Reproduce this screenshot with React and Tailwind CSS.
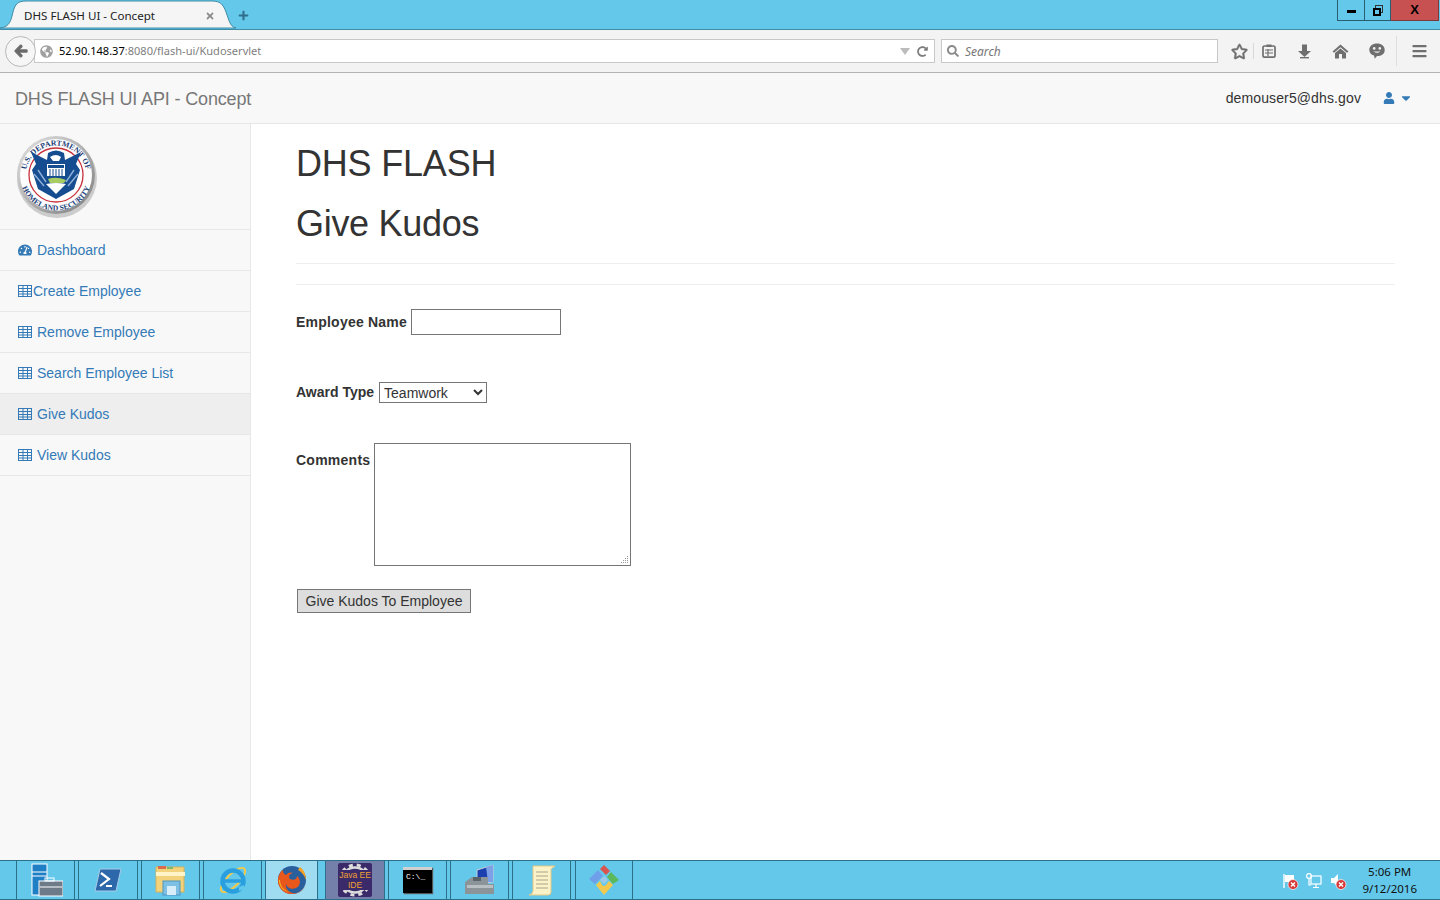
import React from "react";
import { FaTachometerAlt, FaUser, FaCaretDown, FaArrowLeft, FaRegStar, FaSearch, FaRedoAlt, FaGlobeAmericas, FaBars, FaPlus, FaTimes } from "react-icons/fa";

const sans = "font-['Liberation_Sans',Arial,sans-serif]";

function Seal() {
  return (
    <svg width="84" height="84" viewBox="0 0 84 84" className="block">
      <defs>
        <path id="sealTop" d="M 10.5 42 A 30.5 30.5 0 0 1 71.5 42" />
        <path id="sealBot" d="M 4.5 40 A 36.5 36.5 0 0 0 77.5 40" />
        <linearGradient id="sealRim" x1="0" y1="0" x2="1" y2="1">
          <stop offset="0" stopColor="#e4e4e4" />
          <stop offset="1" stopColor="#7d7d7d" />
        </linearGradient>
      </defs>
      <circle cx="42" cy="44" r="40" fill="#a8a8a8" opacity="0.55" />
      <circle cx="41" cy="41" r="39" fill="url(#sealRim)" />
      <circle cx="41" cy="41" r="36" fill="#fdfdfd" />
      <text fontSize="7.8" fontWeight="700" fill="#1a3d78" fontFamily="Liberation Serif, serif">
        <textPath href="#sealTop" startOffset="50%" textAnchor="middle">U.S. DEPARTMENT OF</textPath>
      </text>
      <text fontSize="7.6" fontWeight="700" fill="#1a3d78" fontFamily="Liberation Serif, serif">
        <textPath href="#sealBot" startOffset="50%" textAnchor="middle">HOMELAND SECURITY</textPath>
      </text>
      <circle cx="41" cy="41" r="27" fill="#fff" stroke="#c8323c" strokeWidth="1.3" />
      <path d="M16 18 L32 26 L33 19 Q41 14 49 19 L50 26 L66 18 L61 30 L65 36 L59 55 L41 65 L23 55 L17 36 L21 30 Z" fill="#164c90" />
      <path d="M35 23 Q41 19 46 23 L44 27 L38 27 Z" fill="#fff" />
      <path d="M32 30 H50 V42 H32 Z" fill="#fff" />
      <path d="M33 31 H49 V34 H33 Z" fill="#164c90" />
      <path d="M35 35 V42 M38 35 V42 M41 35 V42 M44 35 V42 M47 35 V42" stroke="#164c90" strokeWidth="1" />
      <path d="M19 40 L29 52 M23 36 L31 48 M63 40 L53 52 M59 36 L51 48" stroke="#8fb0d8" strokeWidth="1.4" />
      <path d="M33 45 Q41 42 51 46 L49 49 L35 49 Z" fill="#a8cc62" />
      <path d="M31 50 Q41 48 51 50 L41 60 Z" fill="#fff" />
    </svg>
  );
}

const TableIcon = () => (
  <svg width="14" height="12" viewBox="0 0 14 12" className="block">
    <rect x="0.5" y="0.5" width="13" height="11" fill="none" stroke="#337ab7" />
    <path d="M0.5 3.5 H13.5 M0.5 6.5 H13.5 M0.5 9 H13.5 M5 0.5 V11.5 M9.5 0.5 V11.5" stroke="#337ab7" strokeWidth="1" />
  </svg>
);

function NavItem({ icon, label, active, tight }) {
  return (
    <div className={`flex items-center h-[41px] border-b border-[#e7e7e7] pl-[17px] text-[14px] text-[#337ab7] ${active ? "bg-[#eeeeee]" : ""}`}>
      <span className="w-[16px] flex justify-center text-[14px]">{icon}</span>
      <span className={tight ? "ml-0" : "ml-[4px]"}>{label}</span>
    </div>
  );
}

function TaskBtn({ children, w, active, ml, bg }) {
  return (
    <div className={`h-[38px] flex items-center justify-center border-l border-r border-[#2b6f88] ${w} ${ml} ${active ? "bg-[#9fdcf2]" : ""} ${bg || ""}`}>
      {children}
    </div>
  );
}

const ServerIcon = () => (
  <svg width="34" height="34" viewBox="0 0 34 34">
    <rect x="3" y="1" width="15" height="31" fill="#1f7fc4" stroke="#fff" strokeWidth="1" />
    <path d="M3 9 H18 M3 13 H18" stroke="#fff" strokeWidth="1" />
    <rect x="10" y="18" width="24" height="15" fill="#6d7b88" stroke="#fff" strokeWidth="1" />
    <rect x="16" y="15" width="9" height="3" fill="none" stroke="#fff" strokeWidth="1" />
    <path d="M11 24 H33" stroke="#fff" strokeWidth="1" />
  </svg>
);
const PsIcon = () => (
  <svg width="28" height="26" viewBox="0 0 28 26">
    <path d="M6 2 H27 L22 24 H1 Z" fill="#2d68ab" stroke="#a9cbe8" />
    <path d="M7 6 L15 12 L6 19 M12 19 H18" stroke="#fff" strokeWidth="2.2" fill="none" />
  </svg>
);
const FolderIcon = () => (
  <svg width="32" height="32" viewBox="0 0 32 32">
    <path d="M1 3 H29 V28 H1 Z" fill="#f2d27a" stroke="#d7b25c" />
    <rect x="3" y="2" width="8" height="3" fill="#d96b4d" />
    <rect x="12" y="3" width="6" height="2" fill="#7fb76a" />
    <path d="M1 8 H30 V12 H1 Z" fill="#fff3c8" />
    <rect x="8" y="17" width="17" height="14" fill="#7ec0e4" stroke="#4e94bf" />
    <rect x="12" y="22" width="9" height="9" fill="#d7eefa" />
  </svg>
);
const IeIcon = () => (
  <svg width="32" height="32" viewBox="0 0 32 32">
    <ellipse cx="16" cy="16" rx="16" ry="6" transform="rotate(-45 16 16)" fill="none" stroke="#f2c94c" strokeWidth="2" />
    <circle cx="16" cy="17" r="10.5" fill="none" stroke="#2a9fe0" strokeWidth="4.5" />
    <path d="M7 17 H26" stroke="#2a9fe0" strokeWidth="3.5" />
    <path d="M22 23 L27 21 L27 25 L22 27 Z" fill="#62c8ea" />
  </svg>
);
const FirefoxIcon = () => (
  <svg width="32" height="32" viewBox="0 0 32 32">
    <circle cx="16" cy="16" r="14" fill="#2a5f9e" />
    <path d="M16 30 C6 30 1 22 2 14 C3 10 5 7 7 6 C7 9 8 10 10 11 C12 8 15 8 17 9 C13 10 12 13 14 15 C18 17 21 15 21 12 C25 15 25 22 20 24 C16 26 11 24 10 20 C9 25 14 30 20 29 C26 28 30 23 30 17 C30 25 24 30 16 30 Z" fill="#e8581c" />
    <path d="M24 3 C28 6 30 11 30 16 C28 11 26 8 22 6 Z" fill="#f6a11f" />
    <path d="M4 16 C4 22 8 27 14 28 C8 28 3 23 3 16 Z" fill="#f6c11f" />
  </svg>
);
const JavaIcon = () => (
  <div className="relative w-[34px] h-[34px] bg-[#3a2a6a] rounded-[2px] flex items-center justify-center">
    <svg width="34" height="34" viewBox="0 0 34 34" className="absolute inset-0">
      <circle cx="17" cy="17" r="15" fill="none" stroke="#dcdcdc" strokeWidth="3" strokeDasharray="4 4" />
      <circle cx="17" cy="17" r="12.5" fill="none" stroke="#dcdcdc" strokeWidth="2.5" />
    </svg>
    <div className="relative whitespace-nowrap text-[8.5px] leading-[10px] text-center text-[#f0a030] bg-[#3a2a6a] px-[1px] font-['Liberation_Sans',sans-serif]">Java EE<br />IDE</div>
  </div>
);
const CmdIcon = () => (
  <div className="w-[29px] h-[26px] bg-black border-t-[3px] border-[#d0d0d0] shadow-[1px_1px_1px_#555] text-white text-[8px] leading-[14px] pl-[3px] font-['Liberation_Mono',monospace]">C:\_</div>
);
const PcIcon = () => (
  <svg width="32" height="32" viewBox="0 0 32 32">
    <path d="M13 6 L29 1 V18 L13 20 Z" fill="#1b3fae" stroke="#c8d0d8" />
    <path d="M22 3 L29 1 V18 L24 18 Z" fill="#7ea0e6" />
    <path d="M1 18 L8 13 H24 V20 L30 20 V30 H1 Z" fill="#8b9499" />
    <rect x="3" y="21" width="26" height="3" fill="#b8c0c4" />
    <rect x="9" y="13" width="8" height="4" fill="#5b6468" />
  </svg>
);
const ScrollIcon = () => (
  <svg width="28" height="32" viewBox="0 0 28 32">
    <path d="M5 2 H27 L23 5 V28 Q23 31 20 31 H1 Q5 30 5 27 Z" fill="#fcf2c8" stroke="#e2c987" />
    <path d="M8 8 H20 M8 12 H20 M8 16 H20 M8 20 H20 M8 24 H20" stroke="#a8a48c" strokeWidth="1" />
  </svg>
);
const GitIcon = () => (
  <svg width="32" height="32" viewBox="0 0 32 32">
    <path d="M16 1 L22 7 L18 11 L12 5 Z" fill="#d9534f" />
    <path d="M23 8 L31 16 L25 20 L19 13 Z" fill="#5cb85c" />
    <path d="M10 6 L15 12 L7 20 L1 15 Z" fill="#6f9fe8" />
    <path d="M8 21 L12 17 L14 21 Q16 23 18 21 L21 17 L25 21 L16 31 Z" fill="#f2c94c" />
    <path d="M16 12 L20 16 L16 20 L12 16 Z" fill="#9ec9e6" />
  </svg>
);
const Flag = () => (
  <svg width="18" height="18" viewBox="0 0 18 18">
    <path d="M3 2 V16" stroke="#fff" strokeWidth="1.4" />
    <path d="M4 3 H13 V10 H4 Z" fill="#fff" />
    <circle cx="12" cy="12.5" r="5" fill="#d83b3b" stroke="#fff" strokeWidth="0.7" />
    <path d="M10 10.5 L14 14.5 M14 10.5 L10 14.5" stroke="#fff" strokeWidth="1.4" />
  </svg>
);
const NetIcon = () => (
  <svg width="18" height="18" viewBox="0 0 18 18" fill="none" stroke="#fff" strokeWidth="1.2">
    <rect x="6" y="4" width="10" height="8" />
    <path d="M11 12 V15 M8 15.5 H14" />
    <circle cx="4" cy="4" r="2.4" />
    <path d="M4 6.5 V13 H6" />
  </svg>
);
const Speaker = () => (
  <svg width="18" height="18" viewBox="0 0 18 18">
    <path d="M2 6 H5 L9 2 V15 L5 11 H2 Z" fill="#fff" />
    <circle cx="12" cy="12.5" r="5" fill="#d83b3b" stroke="#fff" strokeWidth="0.7" />
    <path d="M10 10.5 L14 14.5 M14 10.5 L10 14.5" stroke="#fff" strokeWidth="1.4" />
  </svg>
);

const TabShape = () => (
  <svg width="236" height="29" viewBox="0 0 236 29" className="absolute left-0 top-0">
    <path d="M0 28 C10 27 11 20 13 12 C15 4 18 1 26 1 H212 C220 1 223 4 226 12 C229 20 230 27 236 28 Z" fill="#f5f5f5" stroke="#3f8ca6" strokeWidth="1" />
  </svg>
);

const ClipboardIcon = () => (
  <svg width="14" height="14" viewBox="0 0 14 14" className="block">
    <rect x="1" y="2" width="12" height="11.2" rx="1.5" fill="none" stroke="#6f6f6f" strokeWidth="1.7" />
    <rect x="4.5" y="0.5" width="5" height="2.5" fill="#6f6f6f" />
    <path d="M3 6 H11 M3 9 H11 M6 5 V12" stroke="#6f6f6f" strokeWidth="1.2" />
  </svg>
);
const DownIcon = () => (
  <svg width="15" height="15" viewBox="0 0 15 15" className="block">
    <path d="M5 0.5 H10 V7 H14 L7.5 13 L1 7 H5 Z" fill="#6f6f6f" />
    <path d="M3 13.7 H12" stroke="#6f6f6f" strokeWidth="1.4" />
  </svg>
);
const HomeIcon = () => (
  <svg width="17" height="15" viewBox="0 0 17 15" className="block">
    <path d="M8.5 0.5 L16.5 7.5 L15 8.8 L8.5 3.2 L2 8.8 L0.5 7.5 Z" fill="#6f6f6f" />
    <path d="M8.5 4.5 L14 9 V14.5 H10 V10 H7 V14.5 H3 V9 Z" fill="#6f6f6f" />
  </svg>
);
const ChatIcon = () => (
  <svg width="16" height="16" viewBox="0 0 16 16" className="block">
    <path d="M8 0.5 C12.5 0.5 15.7 3 15.7 7 C15.7 11 12.5 13 8 13 L5.8 15.7 L5 12.6 C2 11.6 0.3 9.7 0.3 7 C0.3 3 3.5 0.5 8 0.5 Z" fill="#6f6f6f" />
    <circle cx="5.2" cy="5.4" r="1.3" fill="#f3f3f3" />
    <circle cx="10.8" cy="5.4" r="1.3" fill="#f3f3f3" />
    <path d="M4.5 8.5 H11.5 Q8 11 4.5 8.5 Z" fill="#f3f3f3" />
  </svg>
);
const RestoreIcon = () => (
  <div className="relative w-[10px] h-[11px]">
    <div className="absolute right-0 top-0 w-[8px] h-[8px] border border-[#333]" />
    <div className="absolute left-0 bottom-0 w-[8px] h-[8px] border-2 border-black bg-[#64c8ea]" />
  </div>
);

export default function App() {
  return (
    <div className={`w-[1440px] h-[900px] overflow-hidden flex flex-col bg-white ${sans}`}>
      {/* Window title bar */}
      <div className="h-[30px] shrink-0 bg-[#64c8ea] border-b border-[#3f8ca6] flex justify-between font-['Noto_Sans',sans-serif]">
        <div className="flex items-start pl-0">
          <div className="relative w-[236px] h-[30px] pl-[24px] pr-[21px] pt-[1px] flex items-center justify-between text-[11.6px] text-[#222]">
            <TabShape />
            <span className="relative">DHS FLASH UI - Concept</span>
            <FaTimes className="relative text-[#8a8a8a] text-[10px]" />
          </div>
          <div className="h-[30px] flex items-center ml-[2px] text-[#2f6d8a] text-[11px]"><FaPlus /></div>
        </div>
        <div className="flex items-start pr-[1px]">
          <div className="w-[28px] h-[21px] border border-t-0 border-[#2b5d72] flex items-center justify-center">
            <div className="w-[9px] h-[3px] bg-black mt-[2px]" />
          </div>
          <div className="w-[26px] h-[21px] border-b border-r border-[#2b5d72] flex items-center justify-center">
            <RestoreIcon />
          </div>
          <div className="w-[48px] h-[21px] bg-[#c75050] border-b border-r border-[#7a3a3a] flex items-center justify-center text-black text-[13px] font-bold font-['Liberation_Sans',sans-serif]">X</div>
        </div>
      </div>

      {/* Browser toolbar */}
      <div className="h-[43px] shrink-0 bg-[#f3f3f3] border-b border-[#b4b4b4] flex items-center pl-[5px] font-['Noto_Sans',sans-serif]">
        <div className="relative z-10 w-[31px] h-[31px] rounded-full bg-[#f6f6f6] border border-[#b8b8b8] flex items-center justify-center text-[#6b6b6b] text-[14px]">
          <FaArrowLeft stroke="currentColor" strokeWidth="40" />
        </div>
        <div className="-ml-[2px] w-[901px] h-[24px] bg-white border border-[#c8c8c8] flex items-center pl-[5px] pr-[6px] text-[11.05px]">
          <FaGlobeAmericas className="text-[#a0a0a0] text-[13px] mr-[6px]" />
          <span className="text-black pt-[1px]">52.90.148.37</span>
          <span className="text-[#808080] pt-[1px]">:8080/flash-ui/Kudoservlet</span>
          <div className="ml-auto flex items-center gap-[7px]">
            <div className="w-0 h-0 border-l-[5px] border-r-[5px] border-t-[7px] border-l-transparent border-r-transparent border-t-[#bcbcbc]" />
            <FaRedoAlt className="text-[#7d7d7d] text-[11px]" />
          </div>
        </div>
        <div className="ml-[6px] w-[277px] h-[24px] bg-white border border-[#c8c8c8] flex items-center pl-[5px] text-[12px] italic text-[#777]">
          <FaSearch className="text-[#8a8a8a] text-[12px] mr-[6px]" />
          <span className="pt-[1px]">Search</span>
        </div>
        <div className="flex items-center text-[#6f6f6f] ml-[13px]">
          <FaRegStar className="text-[17px] w-[17px]" stroke="currentColor" strokeWidth="20" />
          <div className="w-px h-[16px] bg-[#d8d8d8] mx-[5px]" />
          <div className="ml-[3px]"><ClipboardIcon /></div>
          <div className="ml-[21px]"><DownIcon /></div>
          <div className="ml-[20px]"><HomeIcon /></div>
          <div className="ml-[20px]"><ChatIcon /></div>
          <div className="w-px h-[30px] bg-[#dedede] ml-[11px] mr-[15px]" />
          <FaBars className="text-[16px] w-[15px]" />
        </div>
      </div>

      {/* Page nav */}
      <div className="h-[51px] shrink-0 bg-[#f8f8f8] border-b border-[#e7e7e7] flex items-center justify-between pl-[15px] pr-[27px]">
        <span className="text-[18px] text-[#777] tracking-[-0.15px] pt-[2px]">DHS FLASH UI API - Concept</span>
        <div className="flex items-center text-[14px] text-[#333]">
          <span className="tracking-[0.12px]">demouser5@dhs.gov</span>
          <FaUser className="ml-[22px] text-[#337ab7] text-[12px]" />
          <FaCaretDown className="ml-[4px] text-[#337ab7] text-[14px]" />
        </div>
      </div>

      {/* Body */}
      <div className="flex-1 min-h-0 flex">
        <aside className="w-[251px] shrink-0 bg-[#f8f8f8] border-r border-[#e7e7e7]">
          <div className="h-[106px] border-b border-[#e7e7e7] pl-[15px] pt-[10px]">
            <Seal />
          </div>
          <NavItem icon={<FaTachometerAlt />} label="Dashboard" />
          <NavItem icon={<TableIcon />} label="Create Employee" tight />
          <NavItem icon={<TableIcon />} label="Remove Employee" />
          <NavItem icon={<TableIcon />} label="Search Employee List" />
          <NavItem icon={<TableIcon />} label="Give Kudos" active />
          <NavItem icon={<TableIcon />} label="View Kudos" />
        </aside>

        <main className="flex-1 pl-[45px] pr-[45px] text-[#333]">
          <h1 className="text-[36px] leading-[40px] mt-[20px] tracking-[-0.2px]">DHS FLASH</h1>
          <h1 className="text-[36px] leading-[40px] mt-[20px] tracking-[-0.3px]">Give Kudos</h1>
          <div className="h-px bg-[#eeeeee] mt-[19px]" />
          <div className="h-px bg-[#eeeeee] mt-[20px]" />

          <div className="flex items-center mt-[24px] text-[14px]">
            <label className="font-bold mr-[4px] tracking-[0.22px]">Employee Name</label>
            <input className="w-[150px] h-[26px] border border-[#767676] bg-white" />
          </div>

          <div className="flex items-center mt-[47px] text-[14px]">
            <label className="font-bold mr-[5px]">Award Type</label>
            <select defaultValue="Teamwork" className="w-[108px] h-[21px] border border-[#767676] bg-white text-[14px] text-[#333]">
              <option>Teamwork</option>
            </select>
          </div>

          <div className="flex items-start mt-[40px] text-[14px]">
            <label className="font-bold mr-[4px] mt-[7px] tracking-[0.25px]">Comments</label>
            <div className="relative w-[257px] h-[123px]">
              <textarea className="block w-full h-full resize-none border border-[#767676] bg-white" />
              <svg width="9" height="9" viewBox="0 0 9 9" className="absolute right-[2px] bottom-[2px]" fill="#9a9a9a">
                <rect x="7" y="1" width="1" height="1" />
                <rect x="5" y="3" width="1" height="1" /><rect x="7" y="3" width="1" height="1" />
                <rect x="3" y="5" width="1" height="1" /><rect x="5" y="5" width="1" height="1" /><rect x="7" y="5" width="1" height="1" />
                <rect x="1" y="7" width="1" height="1" /><rect x="3" y="7" width="1" height="1" /><rect x="5" y="7" width="1" height="1" /><rect x="7" y="7" width="1" height="1" />
              </svg>
            </div>
          </div>

          <button className="block mt-[23px] ml-[1px] w-[174px] h-[24px] border border-[#767676] bg-[#dddddd] text-[14px] text-[#333]">
            Give Kudos To Employee
          </button>
        </main>
      </div>

      {/* Taskbar */}
      <div className="h-[40px] shrink-0 bg-[#64c8ea] border-t border-b border-[#2b6f88] flex items-center pl-[16px] font-['Noto_Sans',sans-serif]">
        <TaskBtn w="w-[59px]" ml="ml-0"><ServerIcon /></TaskBtn>
        <TaskBtn w="w-[60px]" ml="ml-[3px]"><PsIcon /></TaskBtn>
        <TaskBtn w="w-[59px]" ml="ml-[3px]"><FolderIcon /></TaskBtn>
        <TaskBtn w="w-[59px]" ml="ml-[3px]"><IeIcon /></TaskBtn>
        <TaskBtn w="w-[53px]" ml="ml-[3px]" active><FirefoxIcon /></TaskBtn>
        <TaskBtn w="w-[60px]" ml="ml-[7px]" bg="bg-[#7480aa]"><JavaIcon /></TaskBtn>
        <TaskBtn w="w-[59px]" ml="ml-[3px]"><CmdIcon /></TaskBtn>
        <TaskBtn w="w-[59px]" ml="ml-[3px]"><PcIcon /></TaskBtn>
        <TaskBtn w="w-[59px]" ml="ml-[3px]"><ScrollIcon /></TaskBtn>
        <TaskBtn w="w-[58px]" ml="ml-[4px]"><GitIcon /></TaskBtn>
        <div className="ml-auto flex items-center pr-[23px]">
          <div className="flex items-center gap-[6px] mr-[15px] mt-[2px]">
            <Flag />
            <NetIcon />
            <Speaker />
          </div>
          <div className="text-center text-[11.5px] leading-[17px] text-[#111]">
            <div>5:06 PM</div>
            <div>9/12/2016</div>
          </div>
        </div>
      </div>
    </div>
  );
}
